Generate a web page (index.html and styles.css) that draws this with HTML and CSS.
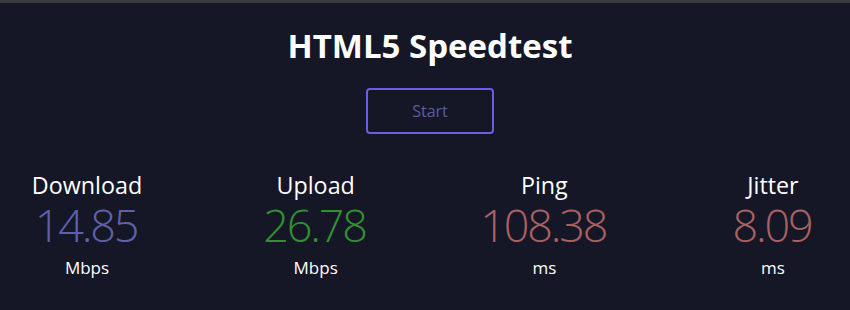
FILE: index.html
```html
<!DOCTYPE html>
<html>
<head>
<meta charset="utf-8">
<link rel="stylesheet" href="styles.css">
</head>
<body>
<div class="topbar"></div>
<main class="page">
  <h1 class="title">HTML5 Speedtest</h1>
  <div class="start-row"><button class="start">Start</button></div>
  <section class="tests">
    <div class="test">
      <div class="name">Download</div>
      <div class="value dl">14.85</div>
      <div class="unit">Mbps</div>
    </div>
    <div class="test">
      <div class="name">Upload</div>
      <div class="value ul">26.78</div>
      <div class="unit">Mbps</div>
    </div>
    <div class="test">
      <div class="name">Ping</div>
      <div class="value ping">108.38</div>
      <div class="unit">ms</div>
    </div>
    <div class="test">
      <div class="name">Jitter</div>
      <div class="value ping">8.09</div>
      <div class="unit">ms</div>
    </div>
  </section>
</main>
</body>
</html>
```

FILE: styles.css
```css
html, body {
  margin: 0;
  padding: 0;
  background: #151727;
  height: 100%;
}
body {
  font-family: "Open Sans", "Noto Sans", sans-serif;
  color: #ffffff;
}
.topbar {
  height: 3px;
  background: #3a3b3d;
}
.page {
  padding-left: 10px;
  text-align: center;
}
.title {
  margin: 0;
  padding-top: 21px;
  font-size: 33px;
  line-height: 44px;
  font-weight: 700;
}
.start-row {
  padding-top: 20px;
  display: flex;
  justify-content: center;
}
.start {
  width: 128px;
  height: 46px;
  background: transparent;
  border: 2px solid #6a5ee8;
  border-radius: 4px;
  color: #5c5ca0;
  font-family: inherit;
  font-size: 16px;
}
.tests {
  margin-top: 36px;
  display: grid;
  grid-template-columns: repeat(4, 150px);
  column-gap: 78.67px;
  justify-content: center;
}
.name {
  font-size: 23.3px;
  line-height: 30px;
}
.value {
  font-size: 45px;
  line-height: 50px;
  font-weight: 300;
  letter-spacing: -2.2px;
  text-indent: -2.2px;
}
.dl { color: #6060aa; }
.ul { color: #309030; }
.ping { color: #aa6060; }
.unit {
  margin-top: 7px;
  font-size: 17px;
  line-height: 22px;
}
```
